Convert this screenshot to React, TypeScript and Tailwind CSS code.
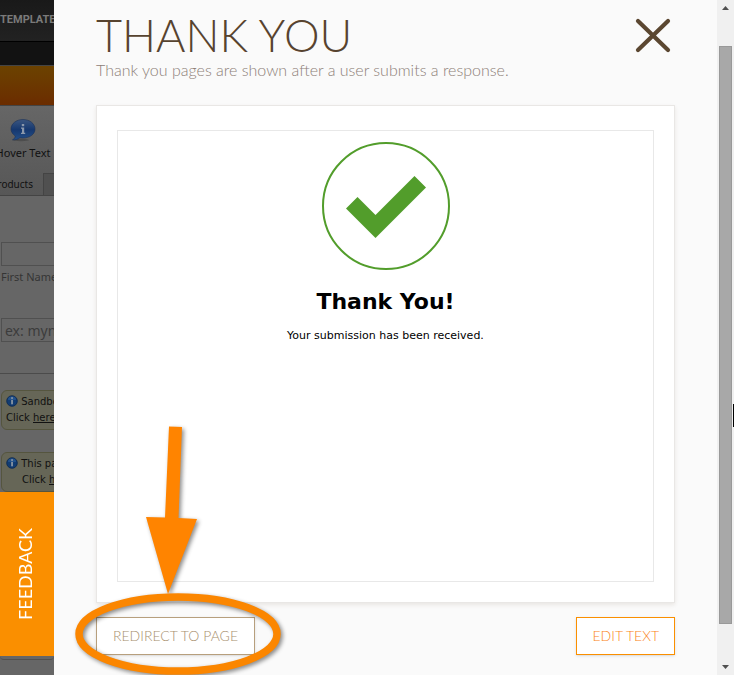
import React from "react";

function InfoDot() {
  return (
    <svg viewBox="0 0 12 12" className="inline-block h-3 w-3 shrink-0 align-[-2px]" aria-hidden="true">
      <circle cx="6" cy="6" r="5.3" fill="#123c72" stroke="#0b2850" strokeWidth="0.8" />
      <path d="M2 5a4 3.4 0 0 1 8 0z" fill="#2f609e" opacity="0.6" />
      <rect x="5.2" y="2.2" width="1.7" height="1.7" fill="#8e99a6" />
      <rect x="5.2" y="4.9" width="1.7" height="4.4" fill="#8e99a6" />
    </svg>
  );
}

function InfoBubble() {
  return (
    <svg viewBox="0 0 26 24" className="h-6 w-[26px]" aria-hidden="true">
      <defs>
        <linearGradient id="bubble" x1="0" y1="0" x2="0" y2="1">
          <stop offset="0" stopColor="#3b5680" />
          <stop offset="0.5" stopColor="#16386f" />
          <stop offset="1" stopColor="#244f88" />
        </linearGradient>
      </defs>
      <ellipse cx="11" cy="22" rx="8" ry="1.2" fill="#3a3a3a" opacity="0.5" />
      <path
        d="M13 1.5C19.5 1.5 25 5.500 25 11s-5.500 9-12 9c-1 0-2-.1-3-.3C8 21.500 5 22 2.500 21.800 4.200 21 5 19.700 5.300 18 2.700 16.300 1 13.900 1 11 1 5.500 6.500 1.500 13 1.500z"
        fill="url(#bubble)"
        stroke="#1b3157"
        strokeWidth="0.6"
      />
      <rect x="11.800" y="6" width="2.400" height="2.200" fill="#8b98ab" />
      <path d="M11 9.500h3.200v5.300h1v1.200H11v-1.200h1v-4h-1z" fill="#8b98ab" />
    </svg>
  );
}

function BuilderStrip() {
  return (
    <aside className="flex w-[54px] shrink-0 flex-col overflow-hidden whitespace-nowrap bg-[#666] font-['DejaVu_Sans',Verdana,sans-serif] text-[#111]">
      <div className="flex h-[42px] items-center border-b border-black bg-linear-to-b from-[#191919] to-[#222] font-['Roboto',sans-serif] text-[11px] font-bold text-[#7a7a7a]">
        TEMPLATE
      </div>
      <div className="h-6 border-b border-[#444] bg-[#121212]" />
      <div className="h-10 border-b border-[#444] bg-linear-to-b from-[#6b4200] to-[#6b2c00]" />
      <div className="flex h-[90px] flex-col justify-between border-b border-[#444] bg-linear-to-b from-[#666] to-[#575757] pt-3 font-['Noto_Sans',sans-serif]">
        <div className="flex w-[46px] flex-col items-center gap-[3px] text-[11px] leading-4">
          <InfoBubble />
          <span>Hover Text</span>
        </div>
        <div className="flex h-[22px] w-full">
          <span className="flex w-11 shrink-0 items-center justify-end overflow-hidden border-r border-[#444] pr-[10px] text-[10px]">
            Products
          </span>
          <span className="flex-1 border-t border-[#444] bg-[#505050]" />
        </div>
      </div>
      <div className="flex h-[178px] flex-col border-b border-[#4b4b4b] pt-[46px] pl-px font-['Noto_Sans',sans-serif]">
        <input
          id="first-name"
          className="block h-6 w-[120px] border border-[#505050] bg-[#666]"
        />
        <label htmlFor="first-name" className="text-[11px] leading-[22px] text-[#353535]">
          First Name
        </label>
        <input
          aria-label="Email"
          placeholder="ex: myname@example.com"
          className="mt-[30px] block h-6 w-[120px] border border-[#505050] bg-[#666] px-[3px] text-sm placeholder:text-[#3c3c3c]"
        />
      </div>
      <div className="flex flex-col gap-[22px] pt-4 pl-px text-[10px] leading-4">
        <p className="h-10 w-[160px] rounded-md border border-[#55553f] bg-[#666657] px-1 pt-[3px]">
          <InfoDot /> Sandbox mode
          <br />
          Click <a href="#sandbox" className="underline">here</a>
        </p>
        <p className="h-10 w-[160px] rounded-md border border-[#55553f] bg-[#666657] px-1 pt-[3px]">
          <InfoDot /> This page
          <br />
          <span className="pl-4">
            Click <a href="#page" className="underline">here</a>
          </span>
        </p>
      </div>
      <button
        type="button"
        className="flex h-[164px] shrink-0 items-center justify-center bg-[#fa8f00] pr-1 font-['Lato',sans-serif] text-lg font-normal text-white"
      >
        <span className="rotate-180 [writing-mode:vertical-rl]">FEEDBACK</span>
      </button>
      <div className="h-1 rounded-b border-b border-[#505050]" />
    </aside>
  );
}

function ThankYouPreview() {
  return (
    <section className="border border-[#e9e7e5] bg-white px-5 pt-6 pb-5 shadow-[0_2px_4px_rgba(90,60,30,0.1)]">
      <div className="flex min-h-[452px] flex-col items-center border border-[#e8e8e8] pt-[11px] font-['DejaVu_Sans',Verdana,sans-serif] text-black">
        <svg viewBox="0 0 128 128" className="h-32 w-32" aria-hidden="true">
          <circle cx="64" cy="64" r="63" fill="none" stroke="#529d2b" strokeWidth="2" />
          <path d="M24 66.500 35.500 55 53.500 73 92.500 34 104 45.500 53.500 96z" fill="#529d2b" />
        </svg>
        <h2 className="mt-4 text-[22px] leading-8 font-bold">Thank You!</h2>
        <p className="mt-2 text-[11px] leading-5">Your submission has been received.</p>
      </div>
    </section>
  );
}

function ScrollBar() {
  return (
    <div className="flex w-[17px] shrink-0 flex-col items-center justify-between bg-[#f0f0f0] py-1" aria-hidden="true">
      <svg viewBox="0 0 7 4" className="mt-[2px] h-1 w-[7px]">
        <path d="M3.500 0 7 4H0z" fill="#505050" />
      </svg>
      <div className="mt-9 mb-[41px] w-[13px] flex-1 border border-[#999] bg-[#a8a8a8]" />
      <svg viewBox="0 0 7 4" className="mb-[2px] h-1 w-[7px]">
        <path d="M0 0h7L3.500 4z" fill="#505050" />
      </svg>
    </div>
  );
}

function Callout() {
  return (
    <svg
      viewBox="0 0 220 255"
      className="pointer-events-none absolute top-[420px] left-[70px] h-[255px] w-[220px] overflow-hidden drop-shadow-[2px_2px_2px_rgba(0,0,0,0.45)]"
      aria-hidden="true"
    >
      <path d="M99 6.500 112 7 108.500 98 127 99 98 174 76 97 95 97.500z" fill="#ff8400" />
      <ellipse cx="108" cy="214" rx="99" ry="37" fill="none" stroke="#fb8600" strokeWidth="7.500" />
    </svg>
  );
}

export default function App() {
  return (
    <div className="relative flex min-h-screen overflow-hidden bg-[#fafafa]">
      <BuilderStrip />
      <main className="min-w-0 flex-1 px-[42px] pt-[10px] font-['Lato',sans-serif]">
        <header className="flex h-[95px] items-start justify-between">
          <div>
            <h1 className="text-[45px] leading-[50px] font-light text-[#57432f]">THANK YOU</h1>
            <p className="text-base leading-5 font-light text-[#8d8078]">
              Thank you pages are shown after a user submits a response.
            </p>
          </div>
          <button type="button" aria-label="Close" className="mt-2 mr-1">
            <svg viewBox="0 0 36 36" className="h-9 w-9">
              <path d="M3 3 33 32M33 3 3 32" stroke="#5b4731" strokeWidth="4.200" strokeLinecap="round" />
            </svg>
          </button>
        </header>
        <ThankYouPreview />
        <footer className="mt-[14px] flex justify-between text-sm font-light">
          <button type="button" className="h-[38px] border border-[#b79f7d] bg-white px-4 text-[#a88f6e] shadow-sm">
            REDIRECT TO PAGE
          </button>
          <button type="button" className="h-[38px] border border-[#fa8f00] bg-white px-[15px] text-[#fa8420] shadow-sm">
            EDIT TEXT
          </button>
        </footer>
      </main>
      <ScrollBar />
      <Callout />
      <div className="absolute top-[404px] right-0 h-[23px] w-px bg-black" />
    </div>
  );
}
